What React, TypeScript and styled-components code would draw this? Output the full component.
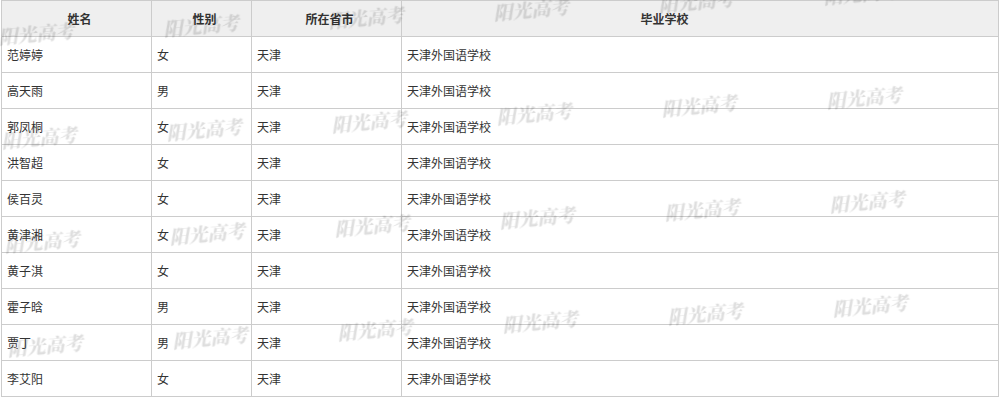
import React from "react";
import styled, { createGlobalStyle } from "styled-components";

const Global = createGlobalStyle`
  html, body { margin: 0; padding: 0; background: #fff; }
  body { font-family: "Noto Sans CJK SC", "Noto Sans", sans-serif; }
`;

const Wrap = styled.div`
  position: relative;
  padding-left: 1px;
  width: 998px;
  overflow: hidden;
  height: 411px;
`;

const Table = styled.table`
  border-collapse: collapse;
  width: 998px;
  table-layout: fixed;
  font-size: 12px;
  color: #333;
  border: 1px solid #ccc;
`;

const Th = styled.th<{ $pr?: number }>`
  height: 35px;
  padding: 0 ${(p) => p.$pr ?? 0}px 0 6px;
  background: #efefef;
  border: 1px solid #ccc;
  font-weight: bold;
  text-align: center;
  vertical-align: middle;
  line-height: 14px;
`;

const Td = styled.td`
  height: 35px;
  padding: 0 0 0 5px;
  border: 1px solid #ccc;
  text-align: left;
  vertical-align: middle;
  line-height: 14px;
  background: transparent;
`;

const Mark = styled.div`
  position: absolute;
  pointer-events: none;
  font-family: "Noto Serif CJK SC", "Noto Sans CJK SC", serif;
  font-weight: 900;
  font-style: italic;
  font-size: 19px;
  line-height: 22px;
  color: rgba(0, 0, 0, 0.085);
  text-shadow: 0.6px 0 0 rgba(0, 0, 0, 0.05);
  transform: rotate(-5deg);
  filter: blur(0.5px);
  white-space: nowrap;
`;

const rows: [string, string][] = [
  ["范婷婷", "女"],
  ["高天雨", "男"],
  ["郭凤桐", "女"],
  ["洪智超", "女"],
  ["侯百灵", "女"],
  ["黄津湘", "女"],
  ["黄子淇", "女"],
  ["霍子晗", "男"],
  ["贾丁", "男"],
  ["李艾阳", "女"],
];

const marks: { x: number; y: number }[] = [];
for (let r = 0; r < 4; r++) {
  for (let c = 0; c < 6; c++) {
    marks.push({ x: c * 165 + r * 3 - 2, y: 22 + r * 104 - c * 8 });
  }
}

export default function App() {
  return (
    <>
      <Global />
      <Wrap>
        <Table>
          <colgroup>
            <col style={{ width: 150 }} />
            <col style={{ width: 100 }} />
            <col style={{ width: 150 }} />
            <col />
          </colgroup>
          <thead>
            <tr>
              <Th>姓名</Th>
              <Th>性别</Th>
              <Th>所在省市</Th>
              <Th $pr={77}>毕业学校</Th>
            </tr>
          </thead>
          <tbody>
            {rows.map(([n, g]) => (
              <tr key={n}>
                <Td>{n}</Td>
                <Td>{g}</Td>
                <Td>天津</Td>
                <Td>天津外国语学校</Td>
              </tr>
            ))}
          </tbody>
        </Table>
        {marks.map((m, i) => (
          <Mark key={i} style={{ left: m.x, top: m.y }}>
            阳光高考
          </Mark>
        ))}
      </Wrap>
    </>
  );
}
